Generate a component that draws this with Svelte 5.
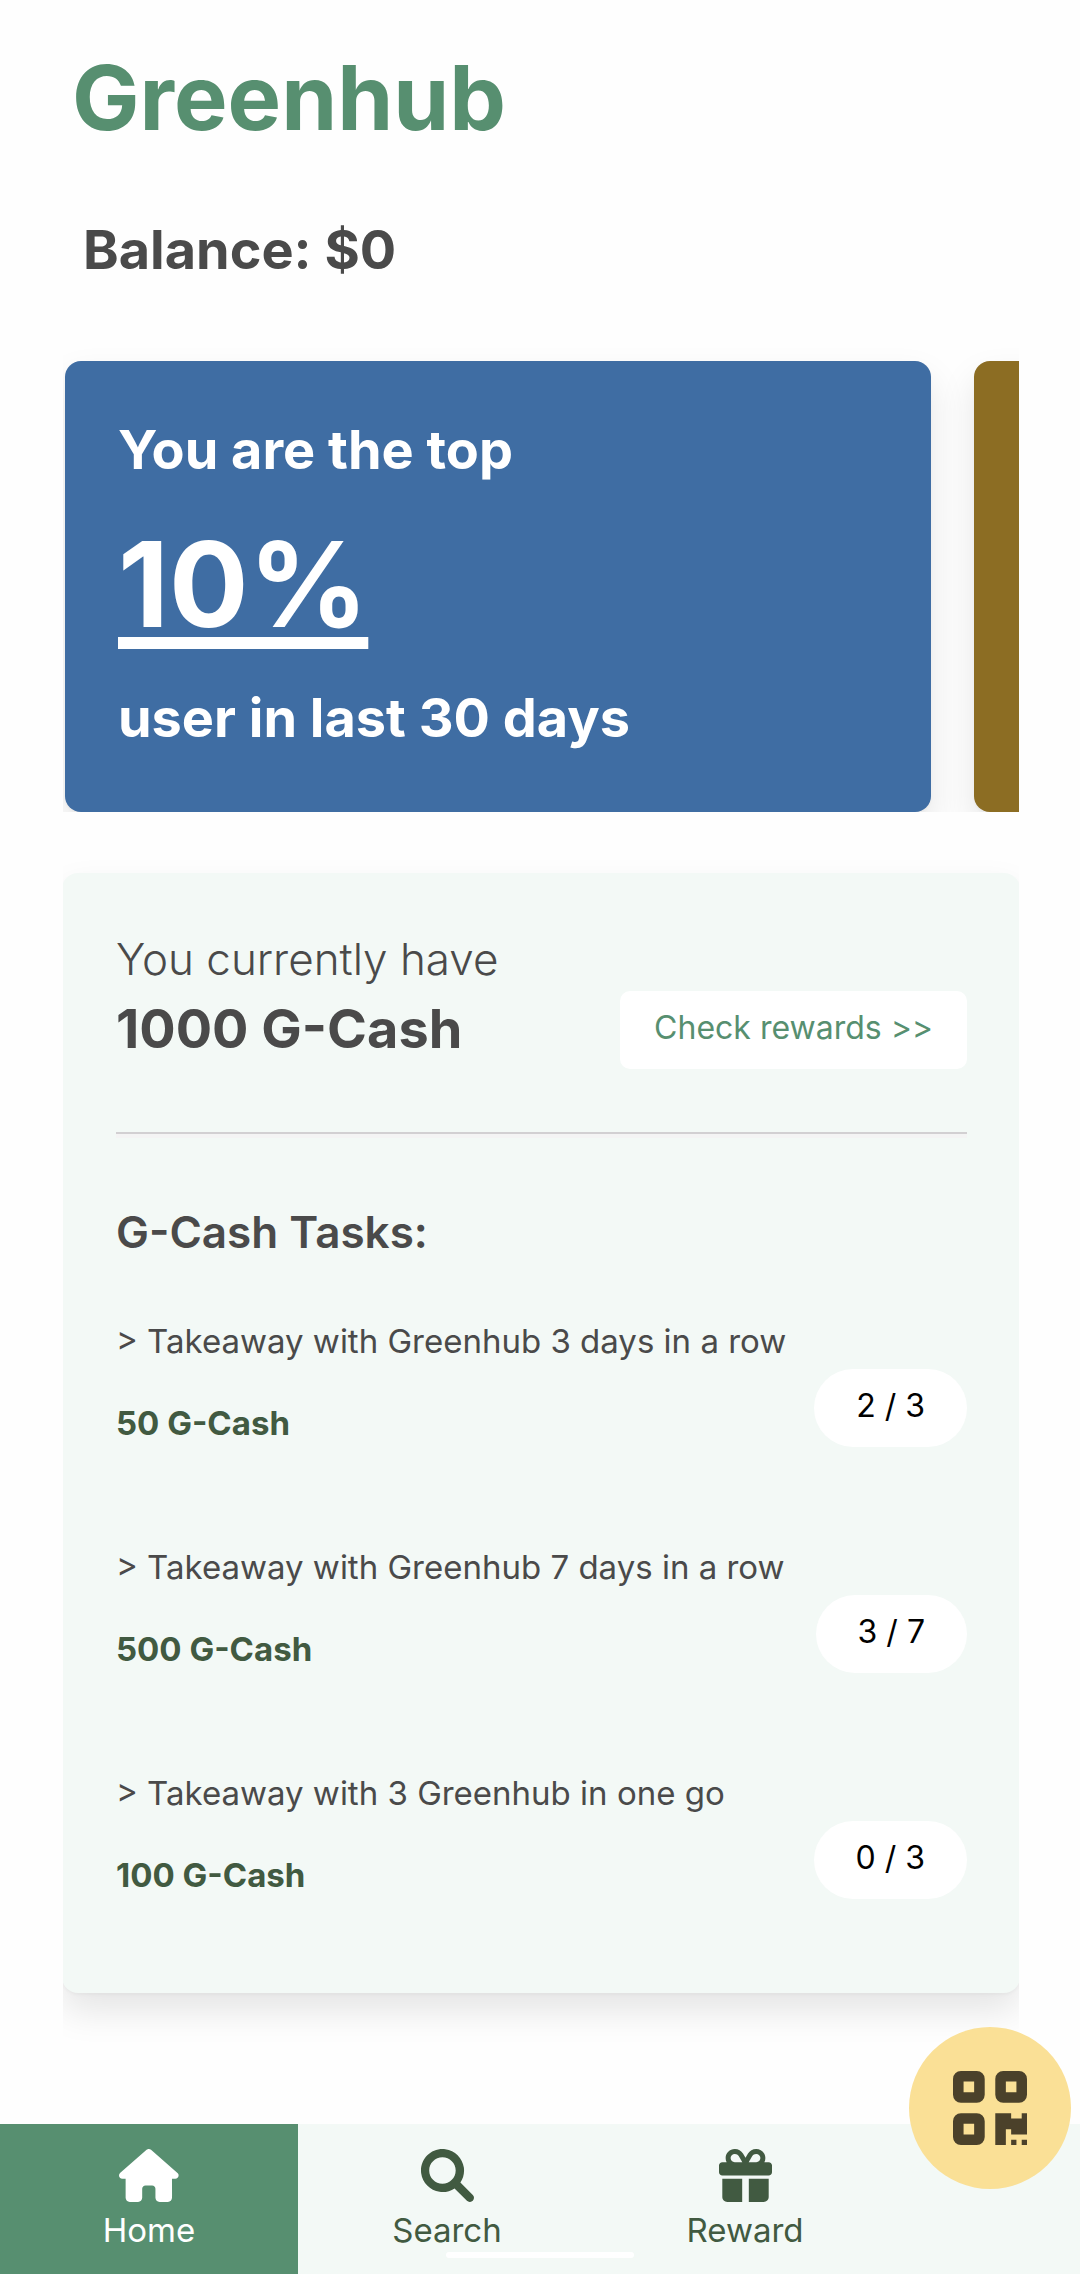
<script>
  const tasks = [
    { name: '> Takeaway with Greenhub 3 days in a row', reward: '50 G-Cash', done: 2, total: 3 },
    { name: '> Takeaway with Greenhub 7 days in a row', reward: '500 G-Cash', done: 3, total: 7 },
    { name: '> Takeaway with 3 Greenhub in one go', reward: '100 G-Cash', done: 0, total: 3 }
  ];

  const tabs = [
    {
      label: 'Home',
      box: '0 0 576 512',
      path: 'M575.8 255.5c0 18-15 32.1-32 32.1h-32l.7 160.2c0 2.7-.2 5.4-.5 8.1V472c0 22.1-17.9 40-40 40H392c-22.1 0-40-17.9-40-40V384c0-17.7-14.3-32-32-32H256c-17.7 0-32 14.3-32 32v88c0 22.1-17.9 40-40 40H104c-22.1 0-40-17.9-40-40V287.6H32c-18 0-32-14-32-32.1c0-9 3-17 10-24L266.4 8c7-7 15-8 22-8s15 2 21 7L564.8 231.5c8 7 12 15 11 24z'
    },
    {
      label: 'Search',
      box: '0 0 512 512',
      path: 'M500.3 443.7l-119.7-119.7c27.22-40.41 40.65-90.9 33.46-144.7C401.8 87.79 326.8 13.32 235.2 1.723C99.01-15.51-15.51 99.01 1.724 235.2c11.6 91.64 86.08 166.7 177.6 178.9c53.8 7.189 104.3-6.236 144.7-33.46l119.7 119.7c15.62 15.62 40.95 15.62 56.57 0C515.9 484.7 515.9 459.3 500.3 443.7zM79.1 208c0-70.58 57.42-128 128-128s128 57.42 128 128c0 70.58-57.42 128-128 128S79.1 278.6 79.1 208z'
    },
    {
      label: 'Reward',
      box: '0 0 512 512',
      path: 'M152 0H154.2C186.1 0 215.7 16.91 231.9 44.45L256 85.46L280.1 44.45C296.3 16.91 325.9 0 357.8 0H360C408.6 0 448 39.4 448 88C448 102.4 444.5 115.1 438.4 128H480C497.7 128 512 142.3 512 160V224C512 241.7 497.7 256 480 256H32C14.33 256 0 241.7 0 224V160C0 142.3 14.33 128 32 128H73.6C67.46 115.1 64 102.4 64 88C64 39.4 103.4 0 152 0zM190.5 68.78C182.9 55.91 169.1 48 154.2 48H152C129.9 48 112 65.91 112 88C112 110.1 129.9 128 152 128H225.3L190.5 68.78zM360 48H357.8C342.9 48 329.1 55.91 321.5 68.78L286.7 128H360C382.1 128 400 110.1 400 88C400 65.91 382.1 48 360 48zM32 288H224V512H80C53.49 512 32 490.5 32 464V288zM288 512V288H480V464C480 490.5 458.5 512 432 512H288z'
    }
  ];

  let active = $state('Home');
</script>

<div class="page">
  <main>
    <h1>Greenhub</h1>
    <p class="balance">Balance: $0</p>

    <section class="carousel" aria-label="Highlights">
      <article class="card blue">
        <p>You are the top</p>
        <p class="percent">10%</p>
        <p>user in last 30 days</p>
      </article>
      <article class="card brown"></article>
    </section>

    <section class="panel">
      <div class="summary">
        <div>
          <p class="have">You currently have</p>
          <p class="amount">1000 G-Cash</p>
        </div>
        <button class="check">Check rewards &gt;&gt;</button>
      </div>
      <hr />
      <h2>G-Cash Tasks:</h2>
      <ul>
        {#each tasks as task}
          <li>
            <div class="task">
              <p>{task.name}</p>
              <p class="reward">{task.reward}</p>
            </div>
            <span class="pill">{task.done} / {task.total}</span>
          </li>
        {/each}
      </ul>
    </section>
  </main>

  <nav>
    {#each tabs as tab}
      <button class="tab" class:active={active === tab.label} onclick={() => (active = tab.label)}>
        <svg viewBox={tab.box} aria-hidden="true"><path d={tab.path} /></svg>
        <span>{tab.label}</span>
      </button>
    {/each}
    <button class="scan" aria-label="Scan QR code">
      <svg viewBox="0 32 448 448" aria-hidden="true">
        <path
          fill-rule="evenodd"
          d="M48 32h96a48 48 0 0 1 48 48v96a48 48 0 0 1-48 48H48a48 48 0 0 1-48-48V80a48 48 0 0 1 48-48zM64 96v64h64V96zM304 32h96a48 48 0 0 1 48 48v96a48 48 0 0 1-48 48h-96a48 48 0 0 1-48-48V80a48 48 0 0 1 48-48zM320 96v64h64V96zM48 288h96a48 48 0 0 1 48 48v96a48 48 0 0 1-48 48H48a48 48 0 0 1-48-48v-96a48 48 0 0 1 48-48zM64 352v64h64v-64zM256 288h96v32h64v-32h32v128h-96v-32h-32v96h-64zM352 448h32v32h-32zM416 448h32v32h-32z"
        />
      </svg>
    </button>
    <div class="indicator"></div>
  </nav>
</div>

<style>
  :global(body) {
    background: #fefefe;
  }

  .page {
    display: flex;
    flex-direction: column;
    min-height: 100vh;
    font-family: Inter, 'Open Sans', sans-serif;
    color: #4a4a4a;
  }

  .page * {
    box-sizing: border-box;
  }

  h1,
  h2,
  p,
  ul {
    margin: 0;
    padding: 0;
  }

  button {
    border: 0;
    font: inherit;
    cursor: pointer;
  }

  main {
    flex: 1;
    margin: 0 61px 0 63px;
    padding: 50px 0 60px;
    overflow: hidden;
  }

  h1 {
    padding-left: 9px;
    font-size: 90px;
    line-height: 96px;
    font-weight: 700;
    color: #578f70;
  }

  .balance {
    margin-top: 72px;
    padding-left: 20px;
    font-size: 54px;
    line-height: 64px;
    font-weight: 700;
  }

  .carousel {
    display: flex;
    gap: 43px;
    margin-top: 39px;
    padding: 40px 0 0 2px;
    overflow: hidden;
  }

  .card {
    flex: 0 0 calc(100% - 88px);
    display: flex;
    flex-direction: column;
    gap: 20px;
    padding: 51px 53px 56px;
    border-radius: 16px;
    color: #fff;
    font-size: 54px;
    line-height: 76px;
    font-weight: 700;
    box-shadow:
      0 18px 36px rgba(0, 0, 0, 0.1),
      0 2px 3px rgba(0, 0, 0, 0.03);
  }

  .blue {
    background: #3f6da3;
  }

  .brown {
    background: #8c6d23;
  }

  .percent {
    font-size: 118px;
    line-height: 152px;
    text-decoration: underline;
    text-decoration-thickness: 12px;
    text-underline-offset: 10px;
    text-decoration-skip-ink: none;
  }

  .panel {
    margin: 61px -1px 0;
    padding: 56px 53px 94px 54px;
    border-radius: 16px;
    background: #f3f9f6;
    box-shadow:
      0 18px 36px rgba(0, 0, 0, 0.1),
      0 2px 3px rgba(0, 0, 0, 0.03);
  }

  .summary {
    display: flex;
    justify-content: space-between;
    align-items: flex-end;
  }

  .have {
    font-size: 44px;
    line-height: 60px;
    font-weight: 300;
  }

  .amount {
    font-size: 54px;
    line-height: 80px;
    font-weight: 700;
  }

  .check {
    padding: 13px 34px 17px;
    border-radius: 10px;
    background: #fff;
    color: #578f70;
    font-size: 32px;
    line-height: 48px;
  }

  hr {
    height: 6px;
    margin: 63px 0 64px;
    border: 0;
    border-top: 2px solid #d2d0d2;
    background: #f4f4f4;
  }

  h2 {
    font-size: 44px;
    line-height: 60px;
    font-weight: 600;
  }

  ul {
    display: flex;
    flex-direction: column;
    gap: 96px;
    margin-top: 55px;
    list-style: none;
  }

  li {
    display: flex;
    justify-content: space-between;
    align-items: flex-end;
    font-size: 33px;
    line-height: 48px;
  }

  .task {
    display: flex;
    flex-direction: column;
    gap: 34px;
  }

  .reward {
    font-weight: 700;
    color: #415a41;
  }

  .pill {
    padding: 13px 42px 17px;
    border-radius: 39px;
    background: #fff;
    color: #000;
    font-size: 32px;
    white-space: nowrap;
  }

  nav {
    position: relative;
    display: grid;
    grid-template-columns: 298fr 298fr 298fr 186fr;
    height: 150px;
    background: #f3f9f6;
  }

  .tab {
    display: flex;
    flex-direction: column;
    align-items: center;
    gap: 4px;
    padding: 25px 0 0;
    background: transparent;
    color: #415a41;
    font-size: 33px;
    line-height: 48px;
  }

  .tab svg {
    height: 53px;
    fill: currentColor;
  }

  .tab.active {
    background: #578f70;
    color: #fff;
  }

  /* Floats over the corner between the content and the tab bar. */
  .scan {
    position: absolute;
    top: -97px;
    right: 9px;
    display: grid;
    place-items: center;
    width: 162px;
    height: 162px;
    padding: 0;
    border-radius: 50%;
    background: #fae096;
  }

  .scan svg {
    width: 74px;
    fill: #4b412a;
  }

  .indicator {
    position: absolute;
    left: 50%;
    bottom: 16px;
    width: 188px;
    height: 6px;
    margin-left: -94px;
    border-radius: 3px;
    background: #fff;
  }
</style>
